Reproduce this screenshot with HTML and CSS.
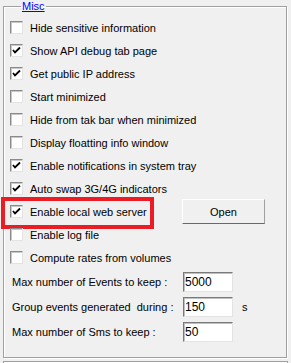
FILE: index.html
```html
<!DOCTYPE html>
<html lang="en">

<head>
    <meta charset="UTF-8">
    <meta name="viewport" content="width=device-width, initial-scale=1.0">
    <title>Misc Options</title>
    <link rel="stylesheet" href="styles.css">
</head>

<body>

    <!-- Misc group box -->
    <fieldset class="group">
        <legend class="group-title">Misc</legend>

        <div class="check-row">
            <span class="check"></span>
            <span class="check-text">Hide sensitive information</span>
        </div>
        <div class="check-row">
            <span class="check checked"><svg viewBox="0 0 11 11"><polyline points="2,5 4,7.5 9,2.5"/></svg></span>
            <span class="check-text">Show API debug tab page</span>
        </div>
        <div class="check-row">
            <span class="check checked"><svg viewBox="0 0 11 11"><polyline points="2,5 4,7.5 9,2.5"/></svg></span>
            <span class="check-text">Get public IP address</span>
        </div>
        <div class="check-row">
            <span class="check"></span>
            <span class="check-text">Start minimized</span>
        </div>
        <div class="check-row">
            <span class="check"></span>
            <span class="check-text">Hide from tak bar when minimized</span>
        </div>
        <div class="check-row">
            <span class="check"></span>
            <span class="check-text">Display floatting info window</span>
        </div>
        <div class="check-row">
            <span class="check checked"><svg viewBox="0 0 11 11"><polyline points="2,5 4,7.5 9,2.5"/></svg></span>
            <span class="check-text">Enable notifications in system tray</span>
        </div>
        <div class="check-row">
            <span class="check checked"><svg viewBox="0 0 11 11"><polyline points="2,5 4,7.5 9,2.5"/></svg></span>
            <span class="check-text">Auto swap 3G/4G indicators</span>
        </div>
        <div class="check-row highlighted">
            <span class="check checked"><svg viewBox="0 0 11 11"><polyline points="2,5 4,7.5 9,2.5"/></svg></span>
            <span class="check-text wide">Enable local web server</span>
            <button class="btn">Open</button>
            <div class="red-frame"></div>
        </div>
        <div class="check-row">
            <span class="check"></span>
            <span class="check-text">Enable log file</span>
        </div>
        <div class="check-row">
            <span class="check"></span>
            <span class="check-text">Compute rates from volumes</span>
        </div>

        <!-- Numeric settings -->
        <div class="field-row">
            <span class="field-label">Max number of Events to keep :</span>
            <input class="field" type="text" value="5000">
        </div>
        <div class="field-row">
            <span class="field-label">Group events generated &nbsp;during :</span>
            <input class="field" type="text" value="150">
            <span class="unit">s</span>
        </div>
        <div class="field-row">
            <span class="field-label">Max number of Sms to keep :</span>
            <input class="field" type="text" value="50">
        </div>
    </fieldset>

    <!-- next group (cut off) -->
    <div class="next-group"></div>

</body>
</html>
```

FILE: styles.css
```css
body {
    background: #f0f0f0;
    font-family: 'Liberation Sans', Arial, sans-serif;
    font-size: 11px;
    color: #000;
    margin: 0;
    padding: 0;
    overflow: hidden;
}

.group {
    margin: 0 4px 0 3px;
    padding: 3px 0 0 6px;
    height: 358px;
    box-sizing: border-box;
    border: 1px solid #a0a0a0;
    box-shadow: 1px 1px 0 #fff, inset 1px 1px 0 #fff;
}

.group-title {
    color: #0000ff;
    text-decoration: underline;
    margin-left: 11px;
    padding: 0 1px;
    line-height: 13px;
}

.check-row {
    position: relative;
    display: flex;
    align-items: center;
    height: 23px;
}

.check {
    width: 13px;
    height: 13px;
    box-sizing: border-box;
    background: #fff;
    border: 1px solid;
    border-color: #8a8a8a #e3e3e3 #e3e3e3 #8a8a8a;
    box-shadow: inset 1px 1px 0 #c8c8c8;
    display: flex;
    align-items: center;
    justify-content: center;
}

.check svg {
    width: 11px;
    height: 11px;
    fill: none;
    stroke: #000;
    stroke-width: 1.8;
}

.check-text {
    margin-left: 7px;
    white-space: nowrap;
}

.check-text.wide {
    width: 152px;
}

.btn {
    width: 83px;
    height: 25px;
    padding: 0;
    background: #f0f0f0;
    border: 1px solid;
    border-color: #fff #a0a0a0 #696969 #fff;
    font-family: 'Liberation Sans', Arial, sans-serif;
    font-size: 11px;
    color: #000;
}

/* annotation around the web server option */
.red-frame {
    position: absolute;
    left: -9px;
    top: -3px;
    width: 153px;
    height: 32px;
    box-sizing: border-box;
    border: 4px solid #ec1c24;
}

.field-row {
    display: flex;
    align-items: center;
    height: 25px;
    padding-left: 2px;
}

.field-row:first-of-type {
    margin-top: 1px;
}

.field-label {
    width: 171px;
    white-space: nowrap;
}

.field {
    width: 50px;
    height: 20px;
    box-sizing: border-box;
    padding: 1px 1px 0;
    margin: 0;
    background: #fff;
    border: 1px solid;
    border-color: #7a7a7a #e3e3e3 #e3e3e3 #7a7a7a;
    box-shadow: inset 1px 1px 0 #c0c0c0;
    font-family: 'Liberation Sans', Arial, sans-serif;
    font-size: 12px;
    color: #000;
    outline: none;
}

.unit {
    margin-left: 9px;
}

.next-group {
    margin: 3px 3px 0 3px;
    height: 1px;
    border: 1px solid #a0a0a0;
    border-bottom: none;
    box-shadow: inset 1px 1px 0 #fff;
}
```
